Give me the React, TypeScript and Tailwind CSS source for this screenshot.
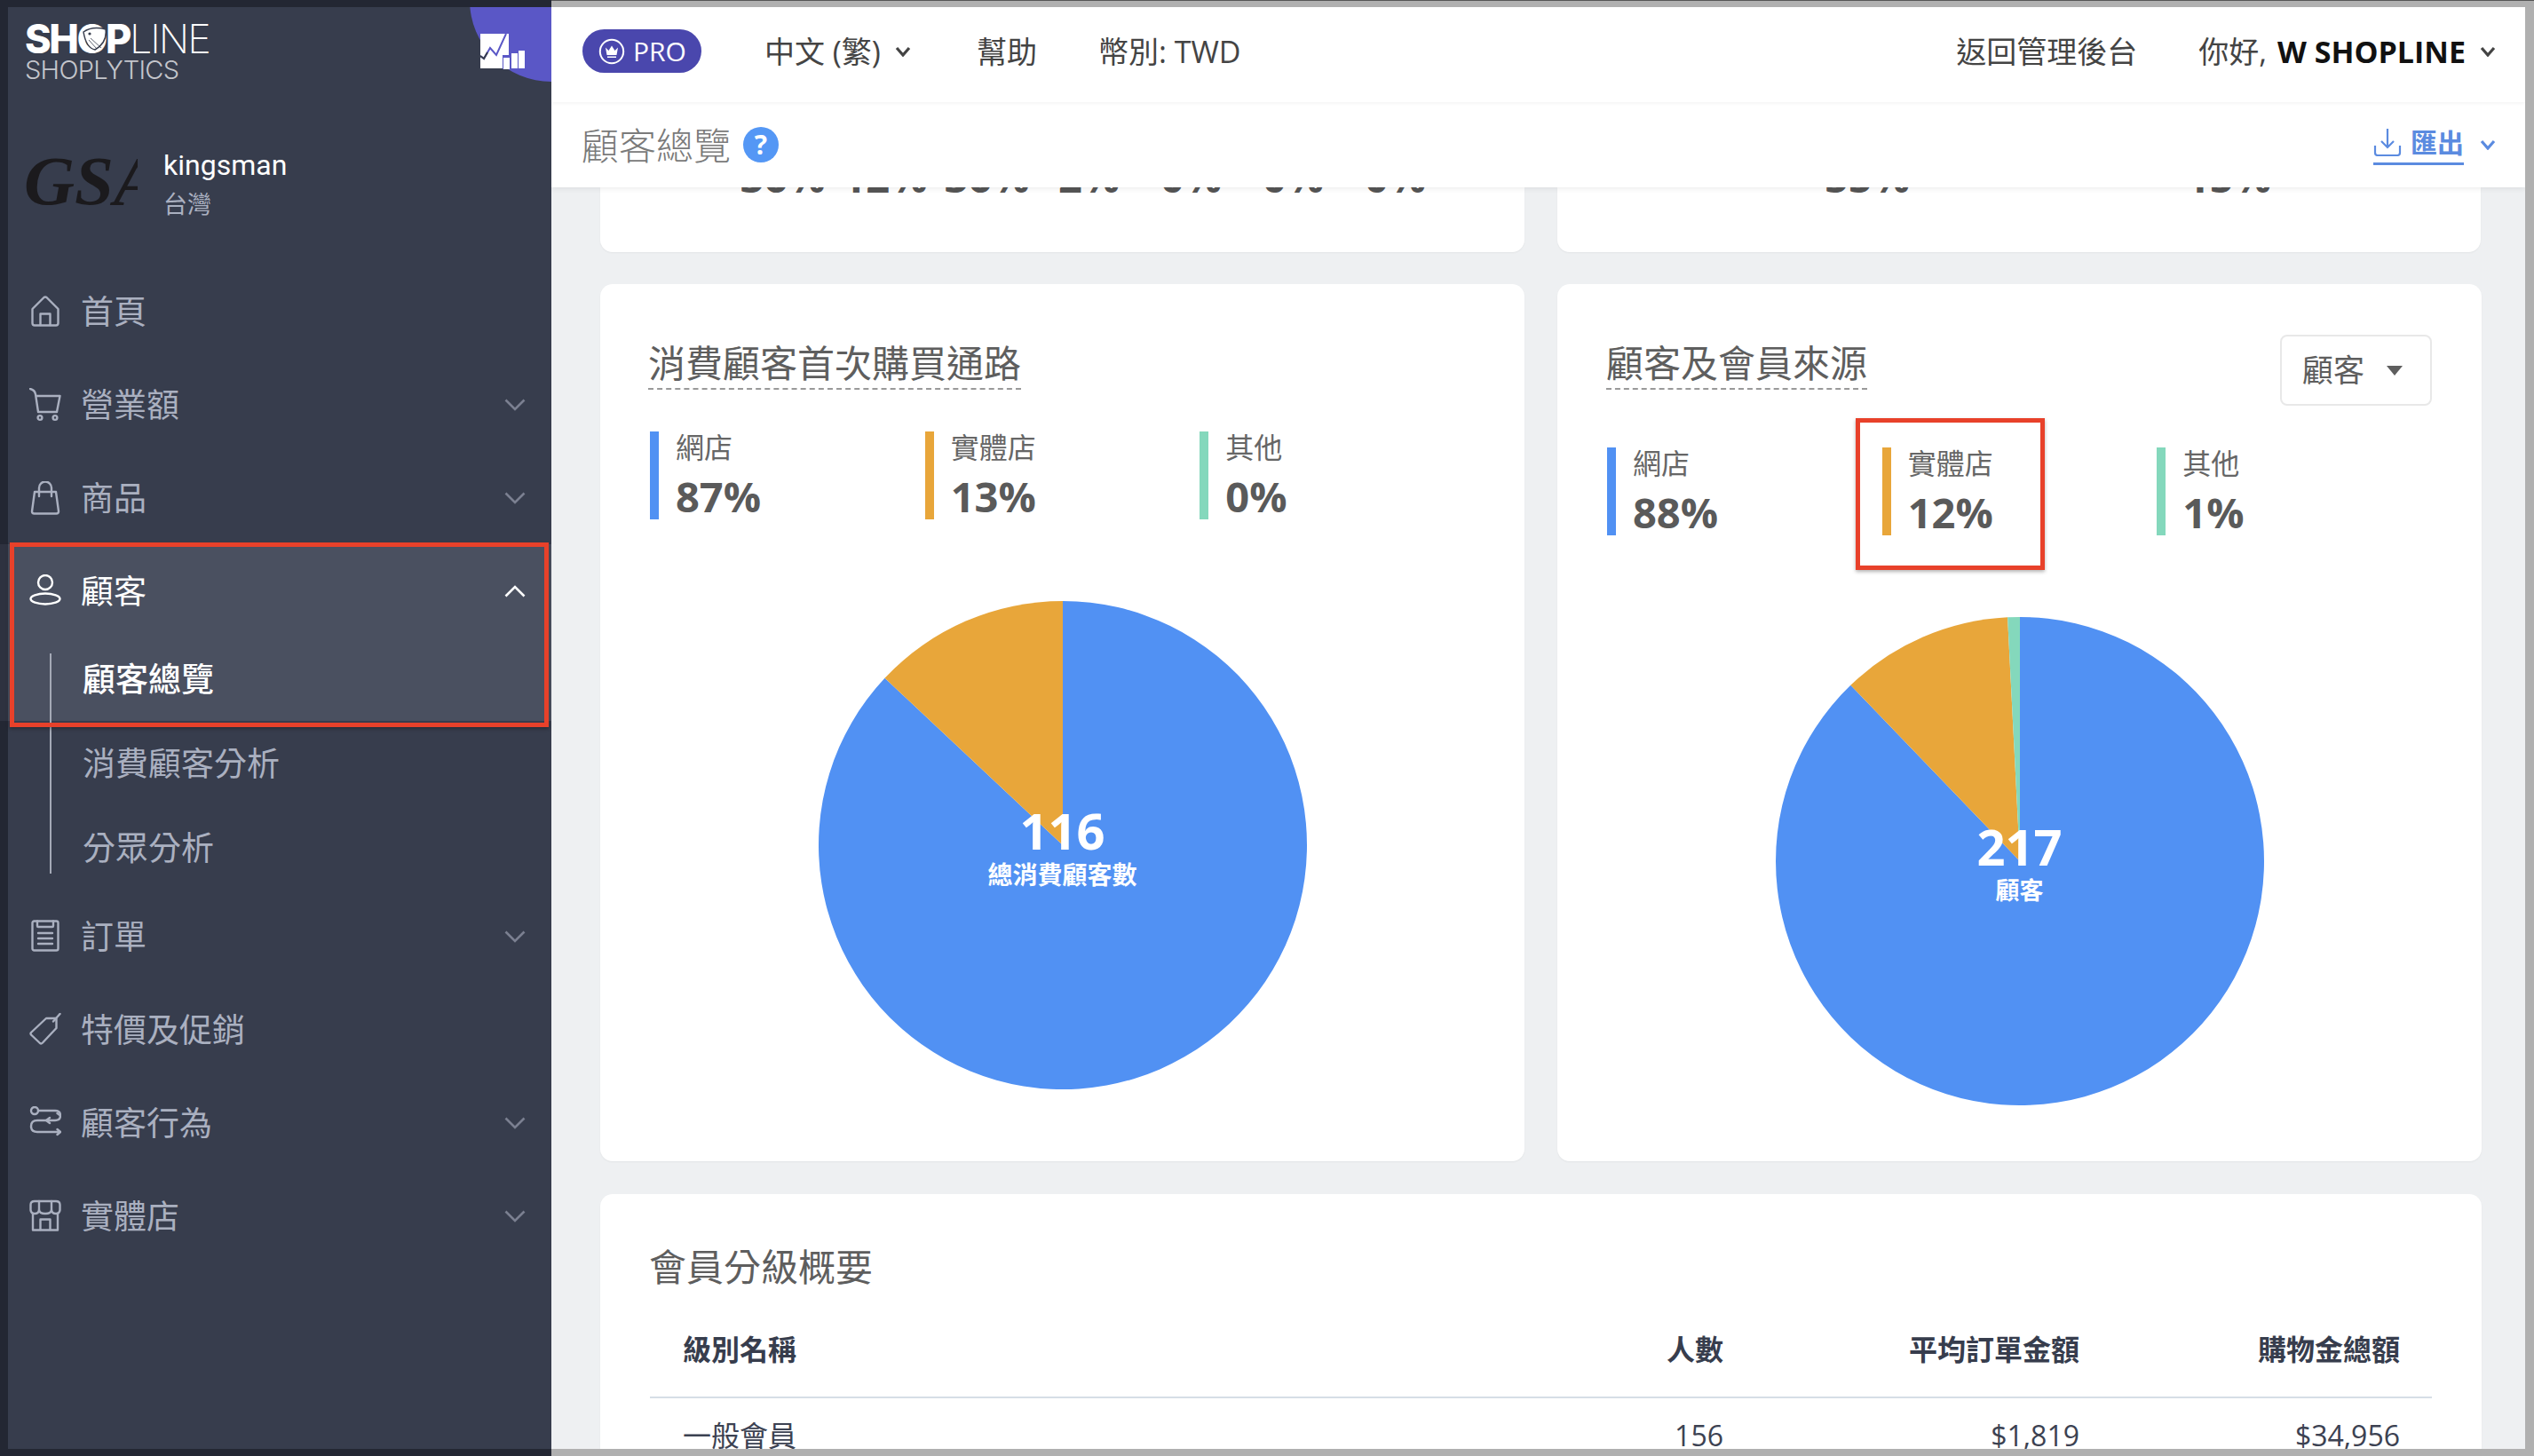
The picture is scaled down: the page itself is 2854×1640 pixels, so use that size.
import React from "react";

const SANS = "font-['Open_Sans','Noto_Sans_CJK_TC',sans-serif]";

function polar(cx: number, cy: number, r: number, deg: number) {
  const a = ((deg - 90) * Math.PI) / 180;
  return [cx + r * Math.cos(a), cy + r * Math.sin(a)];
}
function wedge(r: number, a0: number, a1: number) {
  const [x0, y0] = polar(r, r, r, a0);
  const [x1, y1] = polar(r, r, r, a1);
  const large = a1 - a0 > 180 ? 1 : 0;
  return `M${r} ${r} L${x0} ${y0} A${r} ${r} 0 ${large} 1 ${x1} ${y1} Z`;
}

function Pie({ size, parts, value, label, labelClass }: { size: number; parts: { a0: number; a1: number; c: string }[]; value: string; label: string; labelClass: string }) {
  const r = size / 2;
  return (
    <div className="relative mx-auto mt-[92px]" style={{ width: size, height: size }}>
      <svg width={size} height={size} viewBox={`0 0 ${size} ${size}`} className="block">
        {parts.map((p, i) => (
          <path key={i} d={wedge(r, p.a0, p.a1)} fill={p.c} />
        ))}
      </svg>
      <div className="absolute inset-0 flex flex-col items-center justify-center pt-[2px] text-white">
        <div className="text-[56px] leading-[60px] font-bold">{value}</div>
        <div className={`${labelClass} mt-[4px] leading-[32px] font-bold`}>{label}</div>
      </div>
    </div>
  );
}

function Stat({ color, label, value }: { color: string; label: string; value: string }) {
  return (
    <div className={`w-[310px] h-[99px] border-l-[10px] pl-[19px] ${color}`}>
      <div className="text-[32px] leading-[36px] text-[#666666]">{label}</div>
      <div className="mt-[12px] text-[47px] leading-[50px] font-bold text-[#5a5a5a]">{value}</div>
    </div>
  );
}

const stroke = { fill: "none", stroke: "currentColor", strokeWidth: 2.4, strokeLinecap: "round" as const, strokeLinejoin: "round" as const };

const icons: Record<string, React.ReactNode> = {
  home: (
    <g {...stroke}>
      <path d="M3.5 16 L16.5 3 Q18 1.8 19.5 3 L32.5 16 V32 Q32.5 34.5 30 34.5 H6 Q3.5 34.5 3.5 32 Z" />
      <path d="M12.5 34 V21.5 H23.5 V34" />
    </g>
  ),
  cart: (
    <g {...stroke}>
      <path d="M1 1 Q6 2 7 7 L10 27 H31 L34.5 9 H7.5" />
      <circle cx="12" cy="33.5" r="2.4" />
      <circle cx="29" cy="33.5" r="2.4" />
    </g>
  ),
  bag: (
    <g {...stroke}>
      <path d="M6 12 H30 L33 34 Q33 36.5 30.5 36.5 H5.5 Q3 36.5 3 34 Z" />
      <path d="M11 17 V7.5 A7 7 0 0 1 25 7.5 V17" />
    </g>
  ),
  user: (
    <g {...stroke}>
      <circle cx="18" cy="9" r="8" />
      <ellipse cx="18" cy="27.5" rx="16.5" ry="6" />
    </g>
  ),
  doc: (
    <g {...stroke}>
      <rect x="3.5" y="1.5" width="29" height="33" rx="2" />
      <path d="M9 1.5 V7 Q9 8 10 8 H26 Q27 8 27 7 V1.5" />
      <path d="M10 15 H26 M10 21 H26 M10 27 H26" />
    </g>
  ),
  tag: (
    <g {...stroke}>
      <path d="M2 22 Q1 23 2 24.5 L12 34 Q13.5 35 15 33.5 L30.5 17 V6 H19 Z" />
      <path d="M27 9.5 L34.5 1" />
    </g>
  ),
  flow: (
    <g {...stroke}>
      <circle cx="6" cy="5" r="4" />
      <path d="M10.5 5 H29 Q35 5 35 10.5 Q35 16 29 16 H9 Q2 16 2 22.5 Q2 29 9 29 H35" />
      <path d="M31.5 8 L35 10.5 M23 13 L19 16 L23 19 M31.5 26 L35 29 L31.5 32" />
    </g>
  ),
  store: (
    <g {...stroke}>
      <path d="M6 2 H30 Q34.5 2 34.5 6 V12 Q34 16 30 16 Q25.5 16 25 12 Q24.5 16 18 16 Q11.5 16 11 12 Q10.5 16 6 16 Q2 16 1.5 12 V6 Q1.5 2 6 2 Z" />
      <path d="M11 2 V12 M25 2 V12" />
      <path d="M4 16 V34.5 H32 V16" />
      <path d="M12.5 34 V22.5 H23.5 V34" />
    </g>
  ),
};

function NavIcon({ name }: { name: string }) {
  return (
    <svg width="36" height="38" viewBox="0 0 36 38" className="shrink-0">
      {icons[name]}
    </svg>
  );
}

function NavChevron({ up }: { up?: boolean }) {
  return (
    <svg width="24" height="14" viewBox="0 0 24 14" className={`ml-auto mr-[29px] ${up ? "text-white" : "text-[#7b8091]"}`}>
      <polyline points={up ? "1.5,12.5 12,2 22.5,12.5" : "1.5,1.5 12,12 22.5,1.5"} fill="none" stroke="currentColor" strokeWidth="2.6" />
    </svg>
  );
}

function NavRow({ icon, label, chevron, active }: { icon: string; label: string; chevron?: boolean; active?: boolean }) {
  return (
    <div className={`h-[105px] flex items-center pl-[24px] text-[37px] ${active ? "text-white" : "text-[#aab0c0]"}`}>
      <NavIcon name={icon} />
      <span className="ml-[22px]">{label}</span>
      {chevron && <NavChevron up={active} />}
    </div>
  );
}

function Mini({ className = "" }: { className?: string }) {
  return (
    <svg width="18" height="12" viewBox="0 0 18 12" className={className}>
      <polyline points="2,2 9,10 16,2" fill="none" stroke="currentColor" strokeWidth="3.2" />
    </svg>
  );
}

export default function App() {
  return (
    <div className={`relative w-[2854px] h-[1640px] flex overflow-hidden ${SANS}`}>
      {/* left window column */}
      <div className="w-[621px] h-full shrink-0 bg-[#232733] pl-[9px] py-[8px]">
        <aside className="relative h-full overflow-hidden bg-[#373d4d]">
          <div className="absolute -top-[100px] -right-[92px] w-[184px] h-[184px] rounded-full bg-[#5a57c6]" />
          <svg width="50" height="40" viewBox="0 0 50 40" className="absolute top-[30px] right-[30px]">
            <rect x="0" y="0" width="32" height="39" fill="#ffffff" />
            <rect x="25" y="24" width="10" height="16" fill="#5a57c6" />
            <rect x="26" y="27" width="7" height="13" fill="#ffffff" />
            <rect x="35" y="22" width="7" height="17" fill="#ffffff" />
            <rect x="43" y="19" width="7" height="20" fill="#ffffff" />
            <polyline points="0,25 4,28 11,16 18,24 29,0" fill="none" stroke="#5a57c6" strokeWidth="2" />
            <polyline points="0,25 4,28 8,21" fill="none" stroke="#373d4d" strokeWidth="2" />
          </svg>

          <div className="pl-[19px] pt-[19px]">
            <div className="h-[33px] flex items-center text-white font-['Inter','Liberation_Sans',sans-serif] text-[45px] leading-[33px] tracking-[-2.4px]">
              <span className="font-extrabold">SH</span>
              <span className="relative font-extrabold">
                O
                <svg width="30" height="28" viewBox="0 0 30 28" className="absolute left-[5px] top-[3px]">
                  <path d="M2 6 Q12 -1 27 3 Q29 18 15 26 Q5 24 2 6 Z" fill="#ffffff" stroke="#373d4d" strokeWidth="1.5" />
                  <circle cx="9" cy="8" r="1.6" fill="#373d4d" />
                  <path d="M10 13 L22 24 M8 15 L17 25" stroke="#373d4d" strokeWidth="0.8" />
                </svg>
              </span>
              <span className="font-extrabold">P</span>
              <span className="font-extralight tracking-[-2px]">LINE</span>
            </div>
            <div className="mt-[8px] h-[21px] leading-[21px] text-[29px] text-[#c4c6cc] font-['Inter','Liberation_Sans',sans-serif] font-light tracking-[-0.7px]">SHOPLYTICS</div>

            <div className="mt-[75px] h-[88px] flex items-center">
              <div className="w-[127px] h-[60px] overflow-hidden flex items-center">
                <span className="font-['Liberation_Serif',serif] font-bold italic text-[79px] leading-[60px] text-[#1b1a1d] -ml-[1px] -mt-[9px] whitespace-nowrap">GSA</span>
              </div>
              <div className="ml-[29px]">
                <div className="text-[32px] leading-[44px] text-white font-['Roboto',sans-serif]">kingsman</div>
                <div className="text-[27px] leading-[44px] text-[#aab0c0]">台灣</div>
              </div>
            </div>
          </div>

          <nav className="mt-[46px]">
            <NavRow icon="home" label="首頁" />
            <NavRow icon="cart" label="營業額" chevron />
            <NavRow icon="bag" label="商品" chevron />
            <div className="bg-[#4a5060]">
              <NavRow icon="user" label="顧客" chevron active />
              <div className="h-[94px] flex items-center pl-[84px] text-[37px] text-white font-medium">顧客總覽</div>
            </div>
            <div className="h-[96px] flex items-center pl-[84px] text-[37px] text-[#aab0c0]">消費顧客分析</div>
            <div className="h-[94px] flex items-center pl-[84px] text-[37px] text-[#aab0c0]">分眾分析</div>
            <NavRow icon="doc" label="訂單" chevron />
            <NavRow icon="tag" label="特價及促銷" />
            <NavRow icon="flow" label="顧客行為" chevron />
            <NavRow icon="store" label="實體店" chevron />
          </nav>

          <div className="absolute left-[47px] top-[728px] h-[248px] w-[2px] bg-[#a4a9b6]" />
        </aside>
      </div>

      {/* main column */}
      <div className="flex-1 min-w-0 h-full bg-[#b0b0b0] border-t border-[#555555] pt-[7px] pb-[8px] pr-[10px]">
        <main className="h-full flex flex-col bg-[#eef0f2] overflow-hidden">
          <header className="relative z-20 h-[107px] shrink-0 bg-white flex items-center pl-[35px] pr-[33px] pb-[8px] text-[34px] text-[#444444] shadow-[0_1px_4px_rgba(0,0,0,0.06)]">
            <div className="w-[134px] h-[49px] rounded-full bg-[#4a47ad] flex items-center pl-[18px] text-white">
              <svg width="30" height="30" viewBox="0 0 30 30" className="shrink-0">
                <circle cx="15" cy="15" r="13.2" fill="none" stroke="#ffffff" strokeWidth="2" />
                <path d="M8 10.5 L11.5 14 L15 8.5 L18.5 14 L22 10.5 L20.5 19 H9.5 Z M10 20.5 H20 V22 H10 Z" fill="#ffffff" />
              </svg>
              <span className="ml-[9px] text-[30px]">PRO</span>
            </div>
            <span className="ml-[71px] pt-[2px] whitespace-pre">中文 (繁)</span>
            <Mini className="ml-[16px]" />
            <span className="ml-[74px] pt-[2px]">幫助</span>
            <span className="ml-[69px] pt-[2px]">幣別: TWD</span>
            <span className="ml-auto pt-[2px]">返回管理後台</span>
            <span className="ml-[69px] pt-[2px]">你好, </span>
            <span className="ml-[12px] pt-[2px] font-bold text-[#111111]">W SHOPLINE</span>
            <Mini className="ml-[16px]" />
          </header>

          <div className="relative z-10 h-[96px] shrink-0 bg-white flex items-center pl-[34px] pr-[33px] shadow-[0_2px_6px_rgba(0,0,0,0.07)]">
            <span className="text-[42px] text-[#7a7a7a] font-light">顧客總覽</span>
            <span className="ml-[14px] w-[40px] h-[40px] rounded-full bg-[#5497f5] text-white text-[30px] font-bold leading-[40px] text-center">?</span>
            <div className="ml-auto flex items-center text-[#5b8be0]">
              <div className="relative h-[45px] flex items-center border-b-[3px] border-[#5b8be0] pb-[3px]">
                <svg width="32" height="32" viewBox="0 0 32 32">
                  <path d="M16 1 V22 M9 15 L16 22 L23 15 M2 20 V28 Q2 31 5 31 H27 Q30 31 30 28 V20" fill="none" stroke="currentColor" strokeWidth="2.2" />
                </svg>
                <span className="ml-[10px] text-[30px] font-bold">匯出</span>
              </div>
              <Mini className="ml-[18px]" />
            </div>
          </div>

          <div className="flex-1 min-h-0 overflow-hidden pl-[55px] pr-[50px] text-[#5e5e5e]">
            <div className="flex gap-[37px]">
              <div className="w-[1041px] h-[73px] bg-white rounded-b-[14px] shadow-[0_1px_2px_rgba(0,0,0,0.05)] pl-[148px]">
                <div className="-mt-[37px] grid grid-cols-[repeat(7,115px)] text-center text-[47px] leading-[50px] font-bold text-[#555555]">
                  <span>36%</span><span>12%</span><span>36%</span><span>2%</span><span>0%</span><span>0%</span><span>0%</span>
                </div>
              </div>
              <div className="w-[1041px] h-[73px] bg-white rounded-b-[14px] shadow-[0_1px_2px_rgba(0,0,0,0.05)] pl-[146px]">
                <div className="-mt-[37px] grid grid-cols-[repeat(2,407px)] text-center text-[47px] leading-[50px] font-bold text-[#555555]">
                  <span>55%</span><span>15%</span>
                </div>
              </div>
            </div>

            <div className="mt-[36px] flex gap-[37px]">
              <section className="w-[1041px] h-[988px] bg-white rounded-[14px] shadow-[0_1px_2px_rgba(0,0,0,0.05)] px-[56px] pt-[61px]">
                <h2 className="inline-block -ml-[2px] text-[42px] leading-[56px] border-b-2 border-dashed border-[#999999] font-normal">消費顧客首次購買通路</h2>
                <div className="mt-[47px] flex">
                  <Stat color="border-l-[#5191f3]" label="網店" value="87%" />
                  <Stat color="border-l-[#e8a63a]" label="實體店" value="13%" />
                  <Stat color="border-l-[#84d8bc]" label="其他" value="0%" />
                </div>
                <Pie size={550} value="116" label="總消費顧客數" labelClass="text-[28px]" parts={[{ a0: 0, a1: 313.2, c: "#5191f3" }, { a0: 313.2, a1: 360, c: "#e8a63a" }]} />
              </section>

              <section className="w-[1041px] h-[988px] bg-white rounded-[14px] shadow-[0_1px_2px_rgba(0,0,0,0.05)] px-[56px] pt-[57px]">
                <div className="flex items-start justify-between">
                  <h2 className="mt-[4px] -ml-[1px] inline-block text-[42px] leading-[56px] border-b-2 border-dashed border-[#999999] font-normal">顧客及會員來源</h2>
                  <div className="w-[171px] h-[80px] rounded-[8px] border-2 border-[#e8e8e8] flex items-center pl-[23px] text-[35px]">
                    <span>顧客</span>
                    <svg width="18" height="11" viewBox="0 0 18 11" className="ml-[25px]">
                      <path d="M0 0 H18 L9 11 Z" fill="#5e5e5e" />
                    </svg>
                  </div>
                </div>
                <div className="mt-[47px] flex">
                  <Stat color="border-l-[#5191f3]" label="網店" value="88%" />
                  <Stat color="border-l-[#e8a63a]" label="實體店" value="12%" />
                  <Stat color="border-l-[#84d8bc]" label="其他" value="1%" />
                </div>
                <Pie size={550} value="217" label="顧客" labelClass="text-[27px]" parts={[{ a0: 0, a1: 316.1, c: "#5191f3" }, { a0: 316.1, a1: 357.1, c: "#e8a63a" }, { a0: 357.1, a1: 360, c: "#84d8bc" }]} />
              </section>
            </div>

            <section className="mt-[37px] w-[2119px] bg-white rounded-t-[14px] shadow-[0_1px_2px_rgba(0,0,0,0.05)] px-[56px] pt-[56px] h-[400px]">
              <h2 className="-ml-[1px] text-[42px] leading-[52px] font-normal">會員分級概要</h2>
              <div className="mt-[14px] h-[108px] grid grid-cols-[972px_200px_401px_361px] items-center pl-[37px] border-b-2 border-[#d6dee6] text-[32px] font-semibold text-[#373d4d]">
                <span>級別名稱</span>
                <span className="text-right">人數</span>
                <span className="text-right">平均訂單金額</span>
                <span className="text-right">購物金總額</span>
              </div>
              <div className="h-[84px] grid grid-cols-[972px_200px_401px_361px] items-center pl-[37px] text-[32px] text-[#3c4252]">
                <span>一般會員</span>
                <span className="text-right">156</span>
                <span className="text-right">$1,819</span>
                <span className="text-right">$34,956</span>
              </div>
            </section>
          </div>
        </main>
      </div>

      {/* annotation overlays */}
      <div className="absolute left-0 top-[613px] w-[9px] h-[199px] bg-[#2e3240]" />
      <div className="absolute left-[11px] top-[611px] w-[607px] h-[208px] border-[5px] border-[#e8412a] shadow-[0_2px_4px_rgba(0,0,0,0.3)]" />
      <div className="absolute left-[2090px] top-[471px] w-[213px] h-[171px] border-[5px] border-[#e8412a] shadow-[0_2px_4px_rgba(0,0,0,0.3)]" />
    </div>
  );
}
